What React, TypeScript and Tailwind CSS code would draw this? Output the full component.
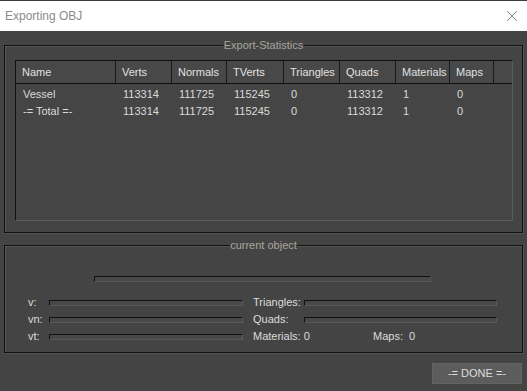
import React from 'react'

const cols = [
  { key: 'name', label: 'Name', w: 'w-[100px]' },
  { key: 'verts', label: 'Verts', w: 'w-[56px]' },
  { key: 'normals', label: 'Normals', w: 'w-[55px]' },
  { key: 'tverts', label: 'TVerts', w: 'w-[57px]' },
  { key: 'tris', label: 'Triangles', w: 'w-[56px]' },
  { key: 'quads', label: 'Quads', w: 'w-[56px]' },
  { key: 'mats', label: 'Materials', w: 'w-[54px]' },
  { key: 'maps', label: 'Maps', w: 'w-[44px]' },
]

const rows = [
  ['Vessel', '113314', '111725', '115245', '0', '113312', '1', '0'],
  ['-= Total =-', '113314', '111725', '115245', '0', '113312', '1', '0'],
]

function GroupBox({ title, className, children }: { title: string; className: string; children: React.ReactNode }) {
  return (
    <div className={`relative mx-[4px] border border-[#111] shadow-[inset_1px_1px_0_#555,1px_1px_0_#555] ${className}`}>
      <span className="absolute -top-[8px] left-1/2 -translate-x-1/2 bg-[#444] px-[1px] text-[11px] leading-[14px] text-[#aaa49d]">
        {title}
      </span>
      {children}
    </div>
  )
}

// thin sunken bar (progress-style)
function Bar({ w }: { w: string }) {
  return <div className={`h-[6px] ${w} border-t border-l border-[#111] border-b border-r border-b-[#5a5a5a] border-r-[#5a5a5a] bg-[#484848]`} />
}

export default function App() {
  return (
    <div className="w-[527px] h-[391px] flex flex-col bg-[#444] text-[#dcdcdc] overflow-hidden" style={{ fontFamily: '"Liberation Sans", Arial, sans-serif' }}>
      {/* title bar */}
      <div className="h-[1px] bg-[#3a3a3a]" />
      <div className="h-[30px] bg-white flex items-center justify-between pl-[5px] pr-[8px]">
        <span className="text-[12px] text-[#8a8a8a]">Exporting OBJ</span>
        <svg width="12" height="12" viewBox="0 0 12 12" className="mr-[1px]">
          <path d="M1 1 L11 11 M11 1 L1 11" stroke="#888" strokeWidth="1" />
        </svg>
      </div>

      <div className="flex-1 flex flex-col pt-[14px]">
        <GroupBox title="Export-Statistics" className="h-[188px] pt-[14px] pl-[10px] pr-[9px]">
          {/* list view */}
          <div className="h-[161px] border-t border-l border-[#111] border-b border-r border-b-[#5c5c5c] border-r-[#5c5c5c] bg-[#454545]">
            <div className="flex h-[23px] border-b border-[#111] bg-[#484848]">
              {cols.map(c => (
                <div key={c.key} className={`${c.w} shrink-0 border-r border-[#1a1a1a] flex items-center pl-[6px] text-[11px] text-[#e2e2e2]`}>
                  {c.label}
                </div>
              ))}
            </div>
            <div className="pt-[2px]">
              {rows.map((r, i) => (
                <div key={i} className="flex h-[17px] items-center">
                  {r.map((v, j) => (
                    <div key={j} className={`${cols[j].w} shrink-0 pl-[7px] text-[11px] text-[#dadada]`}>{v}</div>
                  ))}
                </div>
              ))}
            </div>
          </div>
        </GroupBox>

        <GroupBox title="current object" className="mt-[12px] h-[108px] pt-[30px]">
          <div className="flex justify-center pr-[2px]">
            <Bar w="w-[337px]" />
          </div>
          <div className="mt-[12px] pl-[23px] flex flex-col text-[11px]">
            <div className="flex items-center h-[17px]">
              <span className="w-[21px]">v:</span>
              <Bar w="w-[194px]" />
              <span className="ml-[10px] w-[51px]">Triangles:</span>
              <Bar w="w-[193px]" />
            </div>
            <div className="flex items-center h-[17px]">
              <span className="w-[21px]">vn:</span>
              <Bar w="w-[194px]" />
              <span className="ml-[10px] w-[51px]">Quads:</span>
              <Bar w="w-[193px]" />
            </div>
            <div className="flex items-center h-[17px]">
              <span className="w-[21px]">vt:</span>
              <Bar w="w-[194px]" />
              <span className="ml-[10px] w-[120px]">Materials: 0</span>
              <span>Maps:&nbsp; 0</span>
            </div>
          </div>
        </GroupBox>

        <div className="flex justify-end pr-[5px] mt-[10px]">
          <button className="w-[90px] h-[21px] bg-[#5c5c5c] border border-[#636363] text-[11px] text-[#dedede]">
            -= DONE =-
          </button>
        </div>
      </div>
    </div>
  )
}
